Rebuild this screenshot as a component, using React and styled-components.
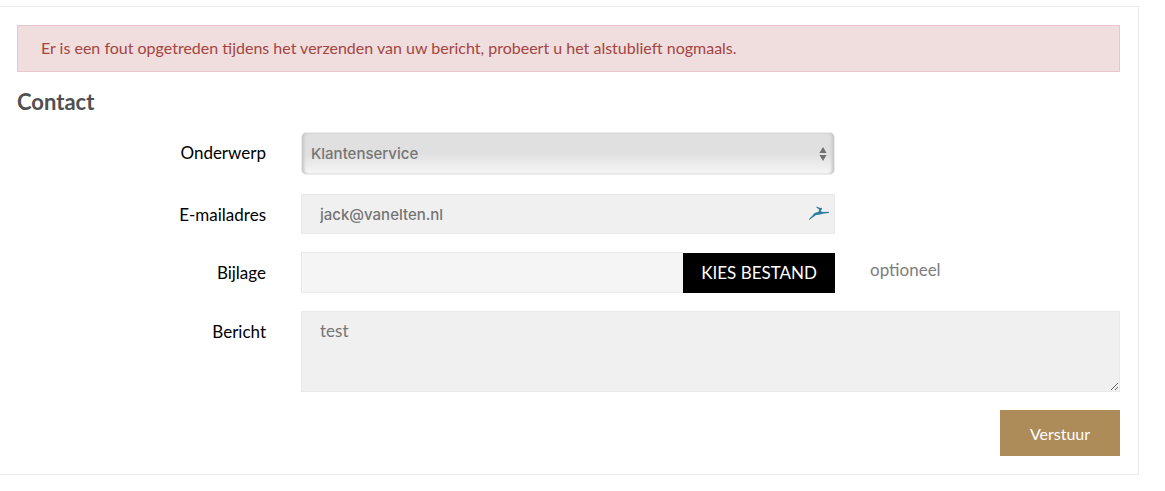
import React, { useRef, useState } from "react";
import styled, { createGlobalStyle } from "styled-components";

const GlobalStyle = createGlobalStyle`
  *, *::before, *::after { box-sizing: border-box; }
  body {
    margin: 0;
    background: #fff;
    color: #000;
    font-family: Lato, sans-serif;
    font-size: 16px;
    line-height: 24px;
  }
  button, input, select, textarea { font: inherit; margin: 0; }
`;

const Panel = styled.main`
  margin: 6px 26px 16px 0;
  padding: 18px 18px 18px 17px;
  border: 1px solid #eaeaea;
  border-left: 0;
`;

const Alert = styled.div`
  padding: 10px 23px 11px;
  border: 1px solid #e6c8cb;
  background: #f0dddd;
  color: #a34542;
`;

const Title = styled.h1`
  margin: 16px 0;
  font-size: 22px;
  line-height: 28px;
  font-weight: 700;
  color: #505050;
`;

const Form = styled.form`
  display: flex;
  flex-direction: column;
  gap: 18px;
`;

const Row = styled.div`
  display: grid;
  grid-template-columns: 249fr 534fr 250fr;
  column-gap: 35px;
`;

const Label = styled.label`
  padding-top: 9px;
  font-size: 17px;
  text-align: right;
`;

const SelectBox = styled.div`
  display: grid;
  align-items: center;
  margin-bottom: 1px;

  & > * { grid-area: 1 / 1; }
`;

const Select = styled.select`
  appearance: none;
  width: 100%;
  height: 43px;
  padding: 0 9px;
  border: 1px solid #ececec;
  border-radius: 5px;
  background: linear-gradient(#e0e0e0, #e0e0e0 50%, #f6f6f6);
  box-shadow: inset 3px 0 3px -1px #c4c4c4, inset -3px 0 3px -1px #c4c4c4;
  color: #757575;
  font-family: Inter, sans-serif;
  font-size: 15px;
  font-weight: 500;
`;

const Arrows = styled.svg`
  justify-self: end;
  margin-right: 8px;
  pointer-events: none;
`;

const fieldStyle = `
  width: 100%;
  border: 1px solid #e9e9e9;
  border-radius: 0;
  background: #f0f0f0;
  color: #757575;
  outline-offset: 0;
`;

const InputBox = styled.div`
  display: grid;
  align-items: center;

  & > * { grid-area: 1 / 1; }
`;

const Input = styled.input`
  ${fieldStyle}
  height: 40px;
  padding: 0 36px 0 18px;
  font-family: Inter, sans-serif;
  font-size: 15px;
  font-weight: 500;
`;

const Bird = styled.svg`
  justify-self: end;
  margin-right: 5px;
  pointer-events: none;
`;

const FilePicker = styled.div`
  display: flex;
`;

const FileName = styled.input`
  ${fieldStyle}
  flex: 1;
  min-width: 0;
  height: 41px;
  padding: 0 18px;
  border-right: 0;
  background: #f5f5f5;
`;

const PickButton = styled.button`
  height: 40px;
  margin-top: 1px;
  padding: 0 18px;
  border: 0;
  background: #000;
  color: #fff;
  font-size: 17px;
  text-transform: uppercase;
  cursor: pointer;
`;

const Hint = styled.span`
  padding-top: 6px;
  font-size: 17px;
  color: #7d7d7d;
`;

const Message = styled.textarea`
  ${fieldStyle}
  grid-column: 2 / -1;
  display: block;
  height: 81px;
  padding: 7px 18px;
  font-size: 17px;
  resize: vertical;
`;

const Submit = styled.button`
  align-self: flex-end;
  height: 46px;
  min-width: 120px;
  padding: 2px 28px 0;
  border: 0;
  background: #ae8c59;
  color: #fff;
  cursor: pointer;
`;

export default function App() {
  const picker = useRef(null);
  const [fileName, setFileName] = useState("");

  return (
    <>
      <GlobalStyle />
      <Panel>
        <Alert role="alert">
          Er is een fout opgetreden tijdens het verzenden van uw bericht, probeert u het alstublieft nogmaals.
        </Alert>
        <Title>Contact</Title>
        <Form onSubmit={(e) => e.preventDefault()}>
          <Row>
            <Label htmlFor="subject">Onderwerp</Label>
            <SelectBox>
              <Select id="subject">
                <option>Klantenservice</option>
              </Select>
              <Arrows width="8" height="16" viewBox="0 0 8 16" fill="#707070" aria-hidden="true">
                <path d="M4 1 7.600 7H.4zM4 15 .4 9h7.200z" />
              </Arrows>
            </SelectBox>
          </Row>
          <Row>
            <Label htmlFor="email">E-mailadres</Label>
            <InputBox>
              <Input id="email" type="email" defaultValue="jack@vanelten.nl" />
              <Bird width="22" height="18" viewBox="0 0 22 18" fill="#2c7f9b" aria-hidden="true">
                <path d="M1.200 14.900 1 14 4.500 10.600 6 8.400 8 7.400 10.500 6.800 11.200 5.400 10.600 4 8.600 2.800 8.400 1.600 11 2.500 12.300 3 14 2.800 13.800 4.400 12.900 5.200 13.100 6.500 15.500 6.900 20.800 6.700 20.900 8 16.500 8.400 14 8.900 11 9.800 8 9.900 5 12.300z" />
              </Bird>
            </InputBox>
          </Row>
          <Row>
            <Label htmlFor="attachment">Bijlage</Label>
            <FilePicker>
              <FileName id="attachment" type="text" readOnly value={fileName} />
              <PickButton type="button" onClick={() => picker.current.click()}>
                Kies bestand
              </PickButton>
              <input
                ref={picker}
                type="file"
                hidden
                aria-label="Bijlage"
                onChange={(e) => setFileName(e.target.files[0]?.name ?? "")}
              />
            </FilePicker>
            <Hint>optioneel</Hint>
          </Row>
          <Row>
            <Label htmlFor="message">Bericht</Label>
            <Message id="message" defaultValue="test" />
          </Row>
          <Submit type="submit">Verstuur</Submit>
        </Form>
      </Panel>
    </>
  );
}
